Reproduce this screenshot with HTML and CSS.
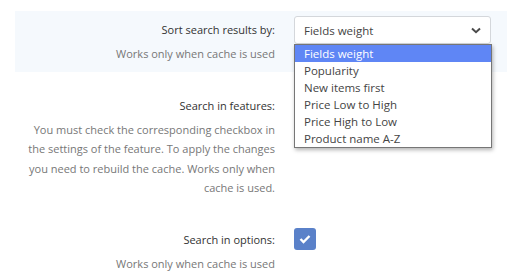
FILE: index.html
```html
<!DOCTYPE html>
<html lang="en">
<head>
    <meta charset="UTF-8">
    <meta name="viewport" content="width=device-width, initial-scale=1.0">
    <title>Search settings</title>
    <link rel="stylesheet" href="styles.css">
</head>
<body>
    <div class="settings">
        <div class="setting-row highlighted">
            <div class="label-col">
                <div class="label">Sort search results by:</div>
                <div class="hint">Works only when cache is used</div>
            </div>
            <div class="control-col">
                <div class="select-wrap">
                    <div class="select">
                        <span>Fields weight</span>
                        <svg class="chevron" width="10" height="7" viewBox="0 0 10 7"><path d="M1 1.5 L5 5.2 L9 1.5" fill="none" stroke="#4a4a4a" stroke-width="2"/></svg>
                    </div>
                    <ul class="options">
                        <li class="selected">Fields weight</li>
                        <li>Popularity</li>
                        <li>New items first</li>
                        <li>Price Low to High</li>
                        <li>Price High to Low</li>
                        <li>Product name A-Z</li>
                    </ul>
                </div>
            </div>
        </div>

        <div class="setting-row">
            <div class="label-col">
                <div class="label">Search in features:</div>
                <div class="hint">You must check the corresponding checkbox in the settings of the feature. To apply the changes you need to rebuild the cache. Works only when cache is used.</div>
            </div>
            <div class="control-col"></div>
        </div>

        <div class="setting-row last">
            <div class="label-col">
                <div class="label">Search in options:</div>
                <div class="hint">Works only when cache is used</div>
            </div>
            <div class="control-col">
                <div class="checkbox">
                    <svg width="12" height="10" viewBox="0 0 12 10"><path d="M1.5 5 L4.5 8 L10.5 2" fill="none" stroke="#fff" stroke-width="2.4"/></svg>
                </div>
            </div>
        </div>
    </div>
</body>
</html>
```

FILE: styles.css
```css
body{
    margin: 0;
    font-family: "Open Sans", "Noto Sans", sans-serif;
    font-size: 11px;
    color: #333;
    background-color: #fff;
}

.settings{
    padding-top: 11px;
    padding-left: 15px;
}

.setting-row{
    display: flex;
    padding-top: 5px;
    padding-bottom: 8px;
    margin-bottom: 15px;
}

.setting-row.last{
    margin-bottom: 0;
    padding-bottom: 0;
}

.highlighted{
    background-color: #f5f9fd;
}

.label-col{
    width: 260px;
    padding-right: 19px;
    text-align: right;
    flex-shrink: 0;
}

.label{
    padding-top: 4px;
    line-height: 20px;
    color: #333;
}

.hint{
    margin-top: 4px;
    line-height: 19.5px;
    color: #777;
}

.control-col{
    flex: 1;
}

.select-wrap{
    position: relative;
    width: 197px;
    font-size: 11.5px;
}

.select{
    height: 26px;
    border: 1px solid #d4d7db;
    border-radius: 3px;
    background-color: #fff;
    display: flex;
    align-items: center;
    justify-content: space-between;
    padding-left: 9px;
    padding-right: 9px;
    color: #444;
}

.options{
    position: absolute;
    top: 28px;
    left: 0;
    width: 196px;
    margin: 0;
    padding: 0;
    list-style: none;
    background-color: #fff;
    border: 1px solid #767676;
    box-shadow: 1px 2px 4px rgba(0, 0, 0, 0.3);
    z-index: 2;
}

.options li{
    height: 17px;
    line-height: 17px;
    padding-left: 9px;
    color: #444;
}

.options li.selected{
    background-color: #5f86f5;
    color: #fff;
}

.checkbox{
    margin-top: 2px;
    width: 22px;
    height: 22px;
    border-radius: 3px;
    background-color: #5a81c9;
    display: flex;
    align-items: center;
    justify-content: center;
}
```
